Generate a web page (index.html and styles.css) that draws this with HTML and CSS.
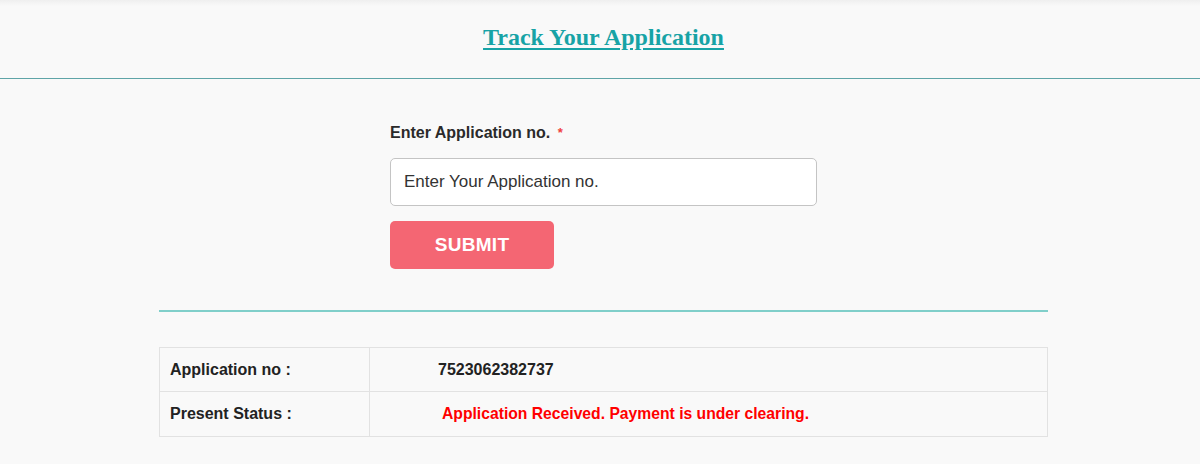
FILE: index.html
```html
<!DOCTYPE html>
<html lang="en">
<head>
<meta charset="utf-8">
<title>Track Your Application</title>
<link rel="stylesheet" href="styles.css">
</head>
<body>
<header class="page-header">
  <h1 class="title"><a href="#">Track Your Application</a></h1>
</header>
<main class="content">
  <form class="track-form">
    <label class="field-label" for="appno">Enter Application no. <span class="req">*</span></label>
    <input class="field-input" id="appno" type="text" placeholder="Enter Your Application no.">
    <button class="submit-btn" type="button">SUBMIT</button>
  </form>
  <hr class="divider">
  <table class="result">
    <tr>
      <th>Application no :</th>
      <td class="value">7523062382737</td>
    </tr>
    <tr class="last-row">
      <th>Present Status :</th>
      <td class="value status">Application Received. Payment is under clearing.</td>
    </tr>
  </table>
</main>
</body>
</html>
```
FILE: styles.css
```css
html, body {
  margin: 0;
  padding: 0;
}
body {
  background: #f9f9f9;
  font-family: "Liberation Sans", Arial, sans-serif;
  color: #222;
  height: 464px;
  overflow: hidden;
}
.page-header {
  height: 78px;
  border-bottom: 1px solid #5fa4a7;
  background: linear-gradient(to bottom, #efefef 0px, #f9f9f9 6px);
  display: flex;
  justify-content: center;
  padding-left: 7px;
  box-sizing: content-box;
}
.title {
  margin: 21px 0 0 0;
  font-family: "Liberation Serif", "Times New Roman", serif;
  font-size: 24px;
  font-weight: bold;
  line-height: 32px;
}
.title a {
  color: #17a3a6;
  text-decoration: underline;
  text-decoration-thickness: 2px;
  text-underline-offset: 3px;
}
.content {
  width: 889px;
  margin-left: 159px;
  padding-top: 45px;
}
.track-form {
  width: 427px;
  margin: 0 auto;
  display: flex;
  flex-direction: column;
  align-items: flex-start;
}
.field-label {
  font-size: 16px;
  font-weight: bold;
  color: #2a2a2a;
  line-height: 18px;
}
.req {
  color: #f04040;
  font-size: 13px;
  vertical-align: top;
  margin-left: 3px;
}
.field-input {
  margin-top: 16px;
  width: 427px;
  height: 48px;
  box-sizing: border-box;
  border: 1px solid #c4c4c4;
  border-radius: 5px;
  background: #fff;
  padding: 0 13px;
  font-family: "Liberation Sans", Arial, sans-serif;
  font-size: 17px;
  color: #333;
  outline: none;
}
.field-input::placeholder {
  color: #333;
}
.submit-btn {
  margin-top: 15px;
  width: 164px;
  height: 48px;
  border: none;
  border-radius: 5px;
  background: #f46673;
  color: #fff;
  font-family: "Liberation Sans", Arial, sans-serif;
  font-weight: bold;
  font-size: 19px;
  letter-spacing: 0.3px;
}
.divider {
  margin: 41px 0 0 0;
  border: none;
  height: 2px;
  background: #80cfca;
}
.result {
  margin-top: 35px;
  width: 100%;
  border-collapse: collapse;
  border: 1px solid #e2e2e2;
}
.result th,
.result td {
  border: 1px solid #e2e2e2;
  font-size: 16px;
  font-weight: bold;
  text-align: left;
  height: 43px;
  padding: 0;
}
.result .last-row th,
.result .last-row td {
  height: 44px;
}
.result th {
  width: 199px;
  padding-left: 10px;
  color: #222;
}
.result .value {
  padding-left: 68px;
  color: #222;
}
.result .status {
  padding-left: 72px;
  font-size: 15.7px;
  color: #f00;
}
```
